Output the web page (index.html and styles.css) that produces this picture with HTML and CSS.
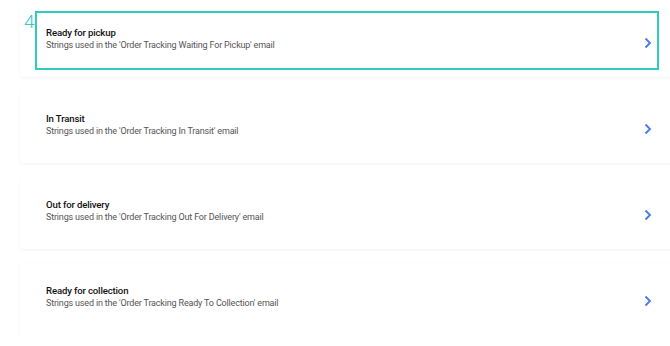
FILE: index.html
```html
<!DOCTYPE html>
<html lang="en">
<head>
    <meta charset="UTF-8">
    <meta name="viewport" content="width=device-width, initial-scale=1.0">
    <title>Order tracking strings</title>
    <link rel="stylesheet" href="styles.css">
</head>
<body>
    <main class="list">
        <a class="item" href="#">
            <div class="item-text">
                <div class="item-title">Ready for pickup</div>
                <div class="item-desc">Strings used in the 'Order Tracking Waiting For Pickup' email</div>
            </div>
            <svg class="chevron" width="10" height="12" viewBox="0 0 10 12"><path d="M2.5 1.5 L7 6 L2.5 10.5" fill="none" stroke="#4b7bef" stroke-width="1.9"/></svg>
        </a>
        <a class="item" href="#">
            <div class="item-text">
                <div class="item-title">In Transit</div>
                <div class="item-desc">Strings used in the 'Order Tracking In Transit' email</div>
            </div>
            <svg class="chevron" width="10" height="12" viewBox="0 0 10 12"><path d="M2.5 1.5 L7 6 L2.5 10.5" fill="none" stroke="#4b7bef" stroke-width="1.9"/></svg>
        </a>
        <a class="item" href="#">
            <div class="item-text">
                <div class="item-title">Out for delivery</div>
                <div class="item-desc">Strings used in the 'Order Tracking Out For Delivery' email</div>
            </div>
            <svg class="chevron" width="10" height="12" viewBox="0 0 10 12"><path d="M2.5 1.5 L7 6 L2.5 10.5" fill="none" stroke="#4b7bef" stroke-width="1.9"/></svg>
        </a>
        <a class="item" href="#">
            <div class="item-text">
                <div class="item-title">Ready for collection</div>
                <div class="item-desc">Strings used in the 'Order Tracking Ready To Collection' email</div>
            </div>
            <svg class="chevron" width="10" height="12" viewBox="0 0 10 12"><path d="M2.5 1.5 L7 6 L2.5 10.5" fill="none" stroke="#4b7bef" stroke-width="1.9"/></svg>
        </a>
    </main>

    <!-- annotation over the first row -->
    <div class="mark-num">4</div>
    <div class="mark-box"></div>
</body>
</html>
```

FILE: styles.css
```css
body {
    margin: 0;
    padding: 0;
    background: #fff;
    font-family: Roboto, "Liberation Sans", Arial, sans-serif;
    overflow: hidden;
}
.list {
    padding: 6px 0 0 20px;
    display: flex;
    flex-direction: column;
    gap: 15px;
}
.item {
    display: flex;
    align-items: center;
    height: 71px;
    margin-right: -20px;
    padding: 0 37px 0 26px;
    background: #fff;
    border-radius: 3px;
    box-shadow: 0 1px 3px rgba(0, 0, 0, 0.06);
    text-decoration: none;
}
.item-text {
    flex: 1;
    padding-bottom: 6px;
}
.item-title {
    font-size: 9.6px;
    font-weight: 500;
    letter-spacing: -0.15px;
    color: #111;
    line-height: 13px;
}
.item-desc {
    font-size: 9px;
    letter-spacing: -0.17px;
    color: #555;
    line-height: 13px;
}
.chevron {
    display: block;
    margin-top: 2px;
}
.mark-num {
    position: absolute;
    left: 24px;
    top: 11px;
    font-size: 19px;
    font-weight: 300;
    line-height: 22px;
    color: #35c9b8;
}
.mark-box {
    position: absolute;
    left: 35px;
    top: 11px;
    width: 620px;
    height: 55px;
    border: 2px solid #2dccbd;
}
```
